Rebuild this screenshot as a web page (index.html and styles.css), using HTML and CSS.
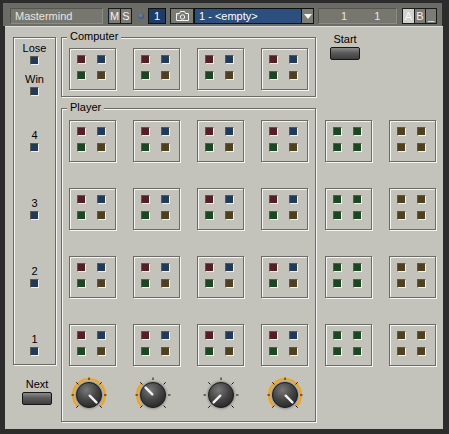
FILE: index.html
```html
<!DOCTYPE html>
<html lang="en">
  <head>
    <meta charset="UTF-8" />
    <meta name="viewport" content="width=device-width, initial-scale=1.0" />
    <title>Mastermind</title>
    <link rel="stylesheet" href="styles.css">
  </head>
  <body>
    <div class="header">
      <div class="title">Mastermind</div>
      <div class="btn-group">
        <button type="button" class="hbtn">M</button>
        <button type="button" class="hbtn">S</button>
      </div>
      <span class="led"></span>
      <div class="voice">1</div>
      <div class="snap">
        <svg width="15" height="10" viewBox="0 0 15 10">
          <path d="M1.5 2.5h3l1-2h4l1 2h3v7h-12z" fill="none" stroke="#f4f4f4" stroke-width="1" />
          <circle cx="7.5" cy="6" r="2.2" fill="none" stroke="#f4f4f4" stroke-width="1" />
          <rect x="2.5" y="3.5" width="1" height="1" fill="#f4f4f4" />
        </svg>
      </div>
      <div class="preset">
        <span class="preset-name">1 - &lt;empty&gt;</span>
        <span class="preset-arrow"></span>
      </div>
      <div class="counter"><span>1</span><span>1</span></div>
      <div class="btn-group">
        <button type="button" class="hbtn on">A</button>
        <button type="button" class="hbtn">B</button>
        <button type="button" class="hbtn">_</button>
      </div>
    </div>

    <div class="panel">
      <div class="side">
        <div class="score etched">
          <div class="mark"><span>Lose</span><i class="peg blue"></i></div>
          <div class="mark win"><span>Win</span><i class="peg blue"></i></div>
          <div class="mark rank first"><span>4</span><i class="peg blue"></i></div>
          <div class="mark rank"><span>3</span><i class="peg blue"></i></div>
          <div class="mark rank"><span>2</span><i class="peg blue"></i></div>
          <div class="mark rank"><span>1</span><i class="peg blue"></i></div>
        </div>
        <div class="action next">
          <span>Next</span>
          <button type="button" class="push"></button>
        </div>
      </div>

      <div class="board">
        <div class="group computer etched">
          <span class="group-label">Computer</span>
          <div class="cells">
            <div class="cell etched"><i class="peg red"></i><i class="peg blue"></i><i class="peg green"></i><i class="peg brown"></i></div>
            <div class="cell etched"><i class="peg red"></i><i class="peg blue"></i><i class="peg green"></i><i class="peg brown"></i></div>
            <div class="cell etched"><i class="peg red"></i><i class="peg blue"></i><i class="peg green"></i><i class="peg brown"></i></div>
            <div class="cell etched"><i class="peg red"></i><i class="peg blue"></i><i class="peg green"></i><i class="peg brown"></i></div>
          </div>
        </div>

        <div class="group player etched">
          <span class="group-label">Player</span>
          <div class="cells">
            <div class="cell etched"><i class="peg red"></i><i class="peg blue"></i><i class="peg green"></i><i class="peg brown"></i></div>
            <div class="cell etched"><i class="peg red"></i><i class="peg blue"></i><i class="peg green"></i><i class="peg brown"></i></div>
            <div class="cell etched"><i class="peg red"></i><i class="peg blue"></i><i class="peg green"></i><i class="peg brown"></i></div>
            <div class="cell etched"><i class="peg red"></i><i class="peg blue"></i><i class="peg green"></i><i class="peg brown"></i></div>

            <div class="cell etched"><i class="peg red"></i><i class="peg blue"></i><i class="peg green"></i><i class="peg brown"></i></div>
            <div class="cell etched"><i class="peg red"></i><i class="peg blue"></i><i class="peg green"></i><i class="peg brown"></i></div>
            <div class="cell etched"><i class="peg red"></i><i class="peg blue"></i><i class="peg green"></i><i class="peg brown"></i></div>
            <div class="cell etched"><i class="peg red"></i><i class="peg blue"></i><i class="peg green"></i><i class="peg brown"></i></div>

            <div class="cell etched"><i class="peg red"></i><i class="peg blue"></i><i class="peg green"></i><i class="peg brown"></i></div>
            <div class="cell etched"><i class="peg red"></i><i class="peg blue"></i><i class="peg green"></i><i class="peg brown"></i></div>
            <div class="cell etched"><i class="peg red"></i><i class="peg blue"></i><i class="peg green"></i><i class="peg brown"></i></div>
            <div class="cell etched"><i class="peg red"></i><i class="peg blue"></i><i class="peg green"></i><i class="peg brown"></i></div>

            <div class="cell etched"><i class="peg red"></i><i class="peg blue"></i><i class="peg green"></i><i class="peg brown"></i></div>
            <div class="cell etched"><i class="peg red"></i><i class="peg blue"></i><i class="peg green"></i><i class="peg brown"></i></div>
            <div class="cell etched"><i class="peg red"></i><i class="peg blue"></i><i class="peg green"></i><i class="peg brown"></i></div>
            <div class="cell etched"><i class="peg red"></i><i class="peg blue"></i><i class="peg green"></i><i class="peg brown"></i></div>
          </div>

          <div class="knobs">
            <!-- value: max -->
            <svg class="knob" width="40" height="40" viewBox="-20 -20 40 40">
              <defs>
                <radialGradient id="knob-body" cx="40%" cy="30%" r="75%">
                  <stop offset="0" stop-color="#787878" />
                  <stop offset="0.55" stop-color="#444444" />
                  <stop offset="1" stop-color="#262626" />
                </radialGradient>
                <radialGradient id="knob-halo" cx="50%" cy="50%" r="50%">
                  <stop offset="0.7" stop-color="#6a6a66" />
                  <stop offset="1" stop-color="#c3c3bb" stop-opacity="0" />
                </radialGradient>
              </defs>
              <circle r="16.5" fill="url(#knob-halo)" />
              <path d="M-11.31 11.31A16 16 0 1 1 11.31 11.31" fill="none" stroke="#f4a414" stroke-width="2.2" />
              <g stroke="#111" stroke-width="1">
                <line x1="-10.6" y1="10.6" x2="-12.7" y2="12.7" />
                <line x1="-15" y1="0" x2="-17.5" y2="0" />
                <line x1="-10.6" y1="-10.6" x2="-12.7" y2="-12.7" />
                <line x1="0" y1="-15" x2="0" y2="-17.5" />
                <line x1="10.6" y1="-10.6" x2="12.7" y2="-12.7" />
                <line x1="15" y1="0" x2="17.5" y2="0" />
                <line x1="10.6" y1="10.6" x2="12.7" y2="12.7" />
              </g>
              <circle r="12.5" fill="url(#knob-body)" stroke="#1c1c1c" stroke-width="1" />
              <line x1="0.7" y1="0.7" x2="7.4" y2="7.4" stroke="#f2f2f2" stroke-width="2.4" stroke-linecap="round" />
            </svg>
            <!-- value: quarter -->
            <svg class="knob" width="40" height="40" viewBox="-20 -20 40 40">
              <circle r="16.5" fill="url(#knob-halo)" />
              <path d="M-11.31 11.31A16 16 0 0 1 -11.31 -11.31" fill="none" stroke="#f4a414" stroke-width="2.2" />
              <g stroke="#111" stroke-width="1">
                <line x1="-10.6" y1="10.6" x2="-12.7" y2="12.7" />
                <line x1="-15" y1="0" x2="-17.5" y2="0" />
                <line x1="-10.6" y1="-10.6" x2="-12.7" y2="-12.7" />
                <line x1="0" y1="-15" x2="0" y2="-17.5" />
                <line x1="10.6" y1="-10.6" x2="12.7" y2="-12.7" />
                <line x1="15" y1="0" x2="17.5" y2="0" />
                <line x1="10.6" y1="10.6" x2="12.7" y2="12.7" />
              </g>
              <circle r="12.5" fill="url(#knob-body)" stroke="#1c1c1c" stroke-width="1" />
              <line x1="-0.7" y1="-0.7" x2="-7.4" y2="-7.4" stroke="#f2f2f2" stroke-width="2.4" stroke-linecap="round" />
            </svg>
            <!-- value: min -->
            <svg class="knob" width="40" height="40" viewBox="-20 -20 40 40">
              <circle r="16.5" fill="url(#knob-halo)" />
              <g stroke="#111" stroke-width="1">
                <line x1="-10.6" y1="10.6" x2="-12.7" y2="12.7" />
                <line x1="-15" y1="0" x2="-17.5" y2="0" />
                <line x1="-10.6" y1="-10.6" x2="-12.7" y2="-12.7" />
                <line x1="0" y1="-15" x2="0" y2="-17.5" />
                <line x1="10.6" y1="-10.6" x2="12.7" y2="-12.7" />
                <line x1="15" y1="0" x2="17.5" y2="0" />
                <line x1="10.6" y1="10.6" x2="12.7" y2="12.7" />
              </g>
              <circle r="12.5" fill="url(#knob-body)" stroke="#1c1c1c" stroke-width="1" />
              <line x1="-0.7" y1="0.7" x2="-7.4" y2="7.4" stroke="#f2f2f2" stroke-width="2.4" stroke-linecap="round" />
            </svg>
            <!-- value: max -->
            <svg class="knob" width="40" height="40" viewBox="-20 -20 40 40">
              <circle r="16.5" fill="url(#knob-halo)" />
              <path d="M-11.31 11.31A16 16 0 1 1 11.31 11.31" fill="none" stroke="#f4a414" stroke-width="2.2" />
              <g stroke="#111" stroke-width="1">
                <line x1="-10.6" y1="10.6" x2="-12.7" y2="12.7" />
                <line x1="-15" y1="0" x2="-17.5" y2="0" />
                <line x1="-10.6" y1="-10.6" x2="-12.7" y2="-12.7" />
                <line x1="0" y1="-15" x2="0" y2="-17.5" />
                <line x1="10.6" y1="-10.6" x2="12.7" y2="-12.7" />
                <line x1="15" y1="0" x2="17.5" y2="0" />
                <line x1="10.6" y1="10.6" x2="12.7" y2="12.7" />
              </g>
              <circle r="12.5" fill="url(#knob-body)" stroke="#1c1c1c" stroke-width="1" />
              <line x1="0.7" y1="0.7" x2="7.4" y2="7.4" stroke="#f2f2f2" stroke-width="2.4" stroke-linecap="round" />
            </svg>
          </div>
        </div>
      </div>

      <div class="extra">
        <div class="action start">
          <span>Start</span>
          <button type="button" class="push"></button>
        </div>
        <div class="cells spare">
          <div class="cell etched"><i class="peg green"></i><i class="peg green"></i><i class="peg green"></i><i class="peg green"></i></div>
          <div class="cell etched"><i class="peg brown"></i><i class="peg brown"></i><i class="peg brown"></i><i class="peg brown"></i></div>
          <div class="cell etched"><i class="peg green"></i><i class="peg green"></i><i class="peg green"></i><i class="peg green"></i></div>
          <div class="cell etched"><i class="peg brown"></i><i class="peg brown"></i><i class="peg brown"></i><i class="peg brown"></i></div>
          <div class="cell etched"><i class="peg green"></i><i class="peg green"></i><i class="peg green"></i><i class="peg green"></i></div>
          <div class="cell etched"><i class="peg brown"></i><i class="peg brown"></i><i class="peg brown"></i><i class="peg brown"></i></div>
          <div class="cell etched"><i class="peg green"></i><i class="peg green"></i><i class="peg green"></i><i class="peg green"></i></div>
          <div class="cell etched"><i class="peg brown"></i><i class="peg brown"></i><i class="peg brown"></i><i class="peg brown"></i></div>
        </div>
      </div>
    </div>
  </body>
</html>
```

FILE: styles.css
```css
body {
  margin: 0;
  width: 449px;
  height: 434px;
  padding-top: 3px;
  box-sizing: border-box;
  background-color: #2c2c2c;
  font-family: "Liberation Sans", Arial, sans-serif;
  font-size: 11px;
  overflow: hidden;
}

/* top bar */

.header {
  display: flex;
  align-items: flex-start;
  width: 439px;
  height: 23px;
  margin-left: 3px;
  padding: 5px 0 0 7px;
  box-sizing: border-box;
  background-color: #6c6c66;
}

.title,
.counter {
  height: 16px;
  box-sizing: border-box;
  background-color: #77776f;
  border-top: 1px solid #55554f;
  border-left: 1px solid #55554f;
  border-bottom: 1px solid #8c8c86;
  border-right: 1px solid #8c8c86;
  color: #e6e6e2;
  line-height: 14px;
}

.title {
  width: 93px;
  padding-left: 4px;
}

.btn-group {
  display: flex;
  height: 16px;
  box-sizing: border-box;
  border: 1px solid #1a1a1a;
  margin-left: 5px;
}

.hbtn {
  width: 11px;
  height: 14px;
  padding: 0;
  border: none;
  background-color: #7c7c76;
  color: #f2f2f2;
  font-family: inherit;
  font-size: 11px;
  line-height: 14px;
  text-align: center;
}

.hbtn + .hbtn {
  border-left: 1px solid #1a1a1a;
}

.hbtn.on {
  background-color: #d2d2ce;
  color: #f4f4f4;
}

.led {
  width: 6px;
  height: 6px;
  margin: 5px 0 0 6px;
  border-radius: 50%;
  background: radial-gradient(circle at 40% 35%, #6f85a8, #34445e);
}

.voice {
  width: 18px;
  height: 16px;
  margin-left: 4px;
  box-sizing: border-box;
  border: 1px solid #101010;
  background-color: #1f3c68;
  color: #ffffff;
  line-height: 14px;
  text-align: center;
}

.snap {
  display: flex;
  align-items: center;
  justify-content: center;
  width: 24px;
  height: 16px;
  margin-left: 4px;
  box-sizing: border-box;
  border: 1px solid #1a1a1a;
  background-color: #7b7b75;
}

.preset {
  display: flex;
  width: 120px;
  height: 16px;
  box-sizing: border-box;
  border: 1px solid #101010;
  background-color: #2c4f7f;
  color: #ffffff;
  line-height: 14px;
}

.preset-name {
  flex: 1;
  padding-left: 4px;
}

.preset-arrow {
  display: flex;
  align-items: center;
  justify-content: center;
  width: 11px;
  border-left: 1px solid #101010;
  background-color: #7c7c76;
}

.preset-arrow::after {
  content: "";
  border-left: 4px solid transparent;
  border-right: 4px solid transparent;
  border-top: 5px solid #f4f4f4;
}

.counter {
  display: flex;
  gap: 27px;
  width: 79px;
  margin-left: 4px;
  padding-left: 22px;
}

/* panel */

.panel {
  display: flex;
  width: 438px;
  height: 403px;
  margin-left: 5px;
  padding: 10px 0 0 8px;
  box-sizing: border-box;
  background-color: #c3c3bb;
  border-top: 1px solid #dededa;
  color: #000000;
}

.etched {
  box-sizing: border-box;
  border: 1px solid #6b6b65;
  box-shadow: 1px 1px 0 #f4f4f0, inset 1px 1px 0 #f4f4f0;
}

.side {
  width: 43px;
  margin-right: 5px;
}

.score {
  display: flex;
  flex-direction: column;
  align-items: center;
  height: 328px;
  padding-top: 5px;
}

.mark {
  display: flex;
  flex-direction: column;
  align-items: center;
  line-height: 11px;
}

.mark .peg {
  margin-top: 2px;
}

.mark.win {
  margin-top: 9px;
}

.mark.rank {
  margin-top: 46px;
}

.mark.rank.first {
  margin-top: 34px;
}

.action {
  display: flex;
  flex-direction: column;
  align-items: center;
  width: 30px;
  line-height: 11px;
}

.next {
  margin: 14px 0 0 9px;
}

.push {
  width: 30px;
  height: 13px;
  margin-top: 2px;
  padding: 0;
  box-sizing: border-box;
  border: 1px solid #161616;
  border-radius: 2px;
  background: linear-gradient(#8a8a8a, #5a5a5a 45%, #3e3e3e);
}

.board {
  width: 255px;
}

.group {
  position: relative;
}

.group-label {
  position: absolute;
  top: -7px;
  left: 5px;
  padding: 0 3px;
  background-color: #c3c3bb;
  line-height: 11px;
}

.computer {
  height: 60px;
  padding: 10px 0 0 7px;
}

.player {
  height: 314px;
  margin-top: 11px;
  padding: 11px 0 0 7px;
}

.cells {
  display: grid;
  grid-template-columns: repeat(4, 47px);
  column-gap: 17px;
  row-gap: 26px;
}

.cell {
  display: grid;
  grid-template-columns: 9px 9px;
  grid-auto-rows: 9px;
  column-gap: 11px;
  row-gap: 7px;
  align-content: start;
  width: 47px;
  height: 42px;
  padding: 6px 0 0 7px;
}

.peg {
  display: block;
  width: 9px;
  height: 9px;
  box-sizing: border-box;
  border-top: 1px solid #5a5a54;
  border-left: 1px solid #5a5a54;
  border-bottom: 1px solid #f0f0ec;
  border-right: 1px solid #f0f0ec;
}

.red {
  background-color: #561e25;
}

.blue {
  background-color: #213a5c;
}

.green {
  background-color: #1d4723;
}

.brown {
  background-color: #4f4120;
}

.knobs {
  display: flex;
  gap: 24px;
  margin-top: 9px;
}

.knob:nth-child(3) {
  margin-left: 4px;
}

.extra {
  margin-left: 9px;
}

.start {
  margin: -3px 0 0 5px;
}

.spare {
  grid-template-columns: repeat(2, 47px);
  margin-top: 60px;
}
```
